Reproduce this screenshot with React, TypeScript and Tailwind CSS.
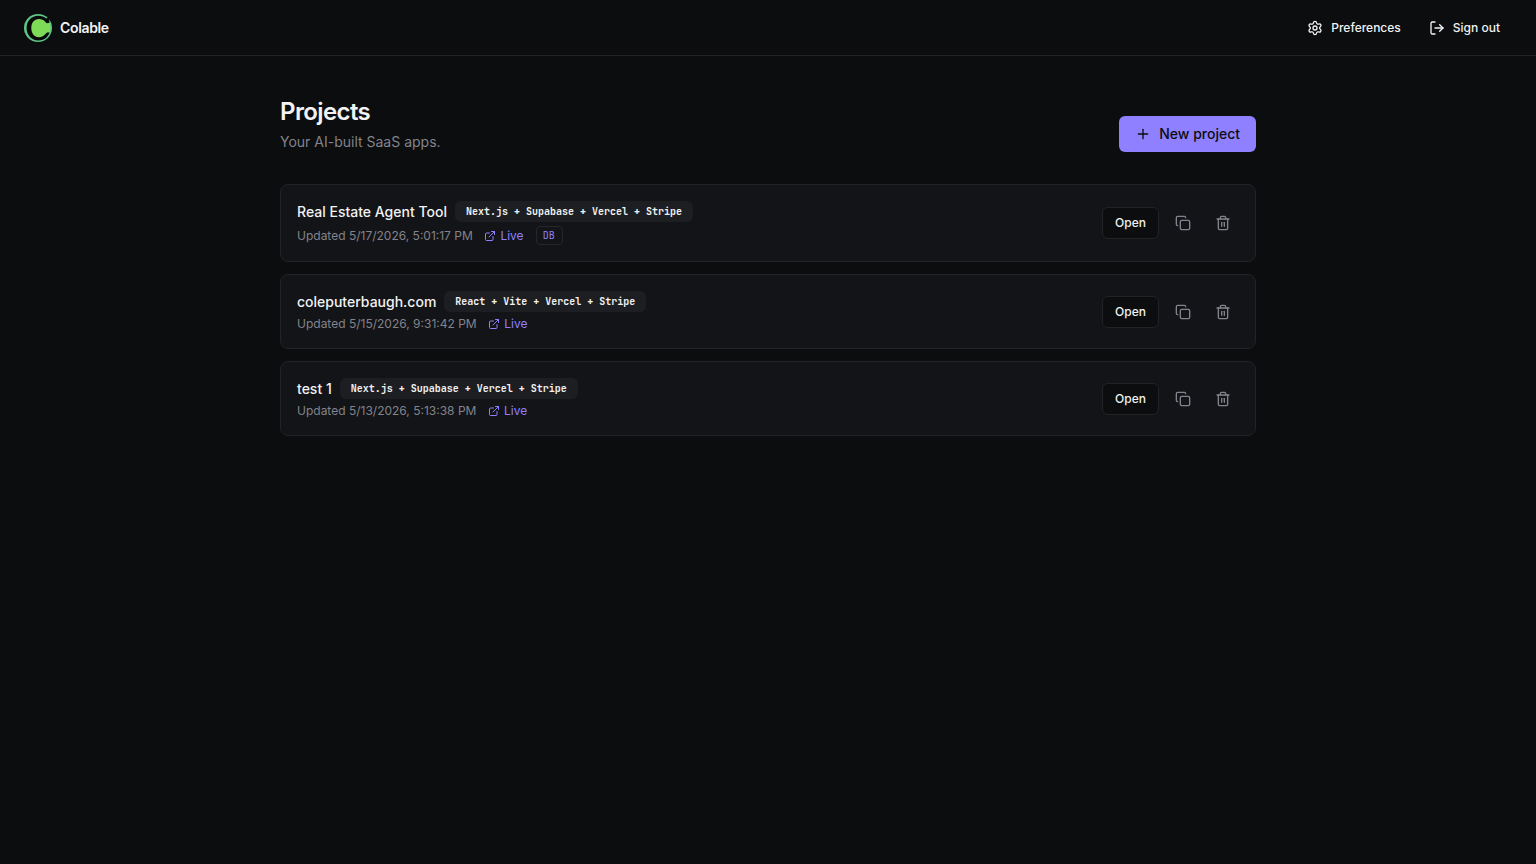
import { Copy, ExternalLink, LogOut, Plus, Settings, Trash2 } from "lucide-react";

type Project = {
  name: string;
  stack: string;
  updated: string;
  db?: boolean;
};

const projects: Project[] = [
  { name: "Real Estate Agent Tool", stack: "Next.js + Supabase + Vercel + Stripe", updated: "5/17/2026, 5:01:17 PM", db: true },
  { name: "coleputerbaugh.com", stack: "React + Vite + Vercel + Stripe", updated: "5/15/2026, 9:31:42 PM" },
  { name: "test 1", stack: "Next.js + Supabase + Vercel + Stripe", updated: "5/13/2026, 5:13:38 PM" },
];

function Logo() {
  return (
    <svg width="28" height="28" viewBox="0 0 28 28" aria-hidden="true">
      <circle cx="14" cy="14" r="14" fill="#5fc488" />
      <path
        d="M14.2 1.8C17.4 1.8 20.2 2.7 22.2 4.4L24.8 3.4L25.6 8.8L22.8 9.6L20.5 8.6L25.6 18.4C23.8 23.4 19.6 26.4 14.2 26.4C7.6 26.4 2.6 21.2 2.6 14C2.6 7 7.6 1.8 14.2 1.8Z"
        fill="#070908"
      />
      <path
        d="M14.8 5C17.6 5 19.7 5.8 21.2 7.8L22.8 9.6L25.8 8.8C26.6 12 26.6 15.5 25.7 18.4L23 18.4L21.2 20.2C19.6 22.2 17.5 23.2 14.8 23.2C10.4 23.2 7.3 19.7 7.3 14.1C7.3 8.6 10.3 5 14.8 5Z"
        fill="#7edb57"
      />
    </svg>
  );
}

function ProjectCard({ project }: { project: Project }) {
  return (
    <li className="flex items-center justify-between rounded-lg border border-[#222327] bg-[#131417] p-4">
      <div>
        <div className="flex items-center gap-2">
          <span className="text-sm leading-5 font-medium">{project.name}</span>
          <span className="rounded-md border border-transparent bg-[#1d1e21] px-2.5 py-0.5 font-['JetBrains_Mono','Liberation_Mono',monospace] text-[10px] leading-[15px] font-semibold whitespace-pre">
            {project.stack}
          </span>
        </div>
        <div className="mt-1 flex items-center gap-[11.6px] text-xs text-[#82838c]">
          <span>Updated {project.updated}</span>
          <a href="#" className="flex items-center gap-1 text-[#8f80ff]">
            <ExternalLink size={12} />
            Live
          </a>
          {project.db && (
            <span className="ml-[0.6px] w-[27px] rounded border border-[#25262a] px-1.5 py-px font-['JetBrains_Mono','Liberation_Mono',monospace] text-[10px] leading-[15px] text-[#8f80ff]">
              DB
            </span>
          )}
        </div>
      </div>
      <div className="flex items-center gap-2">
        <button className="h-8 rounded-md border border-[#222327] bg-[#0b0d0e] px-3 text-xs font-medium">Open</button>
        <button aria-label="Duplicate" className="flex size-8 items-center justify-center text-[#82838c]">
          <Copy size={16} />
        </button>
        <button aria-label="Delete" className="flex size-8 items-center justify-center text-[#82838c]">
          <Trash2 size={16} />
        </button>
      </div>
    </li>
  );
}

export default function App() {
  return (
    <div className="min-h-screen bg-[#0b0d0e] font-['Inter',sans-serif] text-[#f2f2f4] antialiased">
      <header className="flex h-14 items-center justify-between border-b border-[#222327] px-6">
        <div className="flex items-center gap-2">
          <Logo />
          <span className="text-sm font-semibold tracking-tight">Colable</span>
        </div>
        <nav className="flex items-center gap-1 text-xs font-medium">
          <button className="flex h-8 items-center gap-2 px-3">
            <Settings size={16} />
            Preferences
          </button>
          <button className="flex h-8 items-center gap-2 px-3">
            <LogOut size={16} />
            Sign out
          </button>
        </nav>
      </header>
      <main className="mx-auto max-w-5xl px-6 py-10">
        <div className="mb-8 flex items-end justify-between">
          <div>
            <h1 className="text-2xl font-semibold tracking-tight">Projects</h1>
            <p className="mt-1 text-sm text-[#82838c]">Your AI-built SaaS apps.</p>
          </div>
          <button className="flex h-9 items-center gap-2 rounded-md bg-[#8f80ff] px-4 text-sm font-medium text-[#0b0d0e]">
            <Plus size={16} />
            New project
          </button>
        </div>
        <ul className="flex flex-col gap-3">
          {projects.map((project) => (
            <ProjectCard key={project.name} project={project} />
          ))}
        </ul>
      </main>
    </div>
  );
}
